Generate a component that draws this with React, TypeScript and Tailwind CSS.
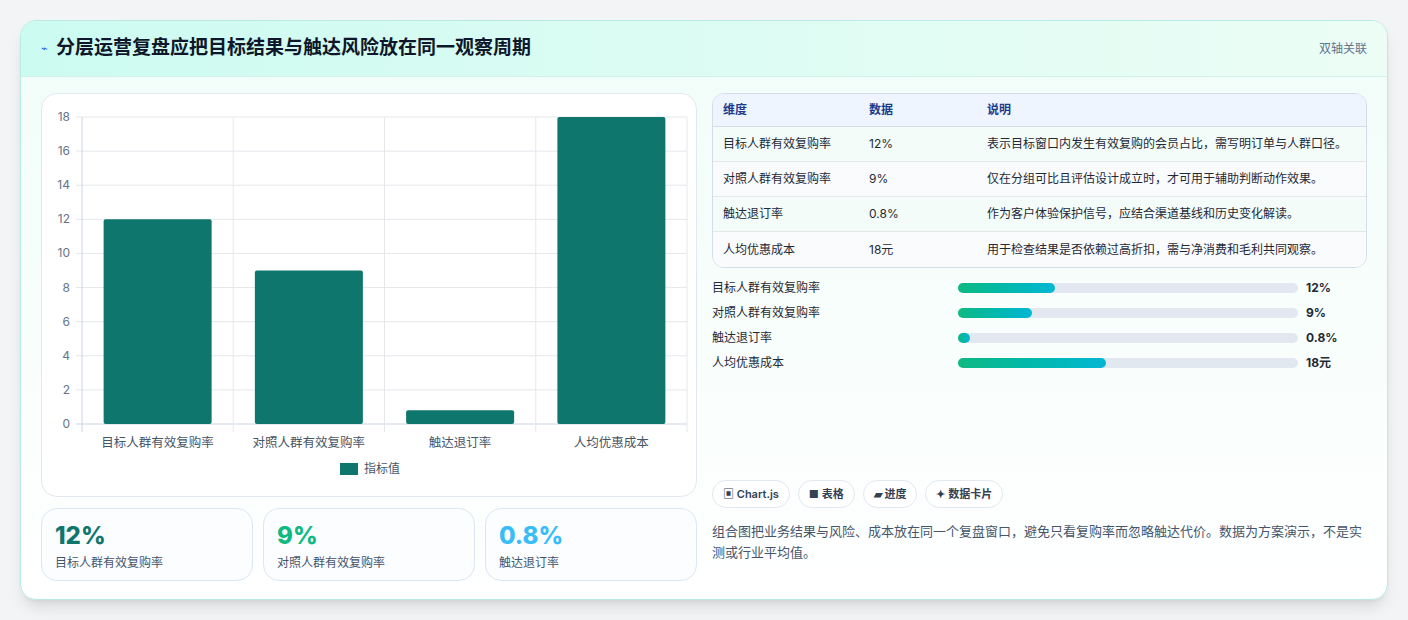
import React from 'react';

const font = { fontFamily: 'Inter, "Noto Sans CJK SC", sans-serif' };

const rows = [
  ['目标人群有效复购率', '12%', '表示目标窗口内发生有效复购的会员占比，需写明订单与人群口径。'],
  ['对照人群有效复购率', '9%', '仅在分组可比且评估设计成立时，才可用于辅助判断动作效果。'],
  ['触达退订率', '0.8%', '作为客户体验保护信号，应结合渠道基线和历史变化解读。'],
  ['人均优惠成本', '18元', '用于检查结果是否依赖过高折扣，需与净消费和毛利共同观察。'],
];

const bars = [
  { label: '目标人群有效复购率', v: '12%', w: 97 },
  { label: '对照人群有效复购率', v: '9%', w: 74 },
  { label: '触达退订率', v: '0.8%', w: 12 },
  { label: '人均优惠成本', v: '18元', w: 148 },
];

function Chart() {
  const left = 40, right = 645, top = 23, bottom = 330;
  const unit = (bottom - top) / 18;
  const col = (right - left) / 4;
  const data = [
    ['目标人群有效复购率', 12],
    ['对照人群有效复购率', 9],
    ['触达退订率', 0.8],
    ['人均优惠成本', 18],
  ] as const;
  return (
    <svg width="656" height="402" className="block">
      {[0, 2, 4, 6, 8, 10, 12, 14, 16, 18].map((t) => {
        const y = bottom - t * unit;
        return (
          <g key={t}>
            <line x1={left - 6} x2={right} y1={y} y2={y} stroke={t === 0 ? '#cbd5e1' : '#e5e7eb'} />
            <text x={left - 12} y={y + 4} textAnchor="end" fontSize="12" fill="#64748b" style={font}>{t}</text>
          </g>
        );
      })}
      {[0, 1, 2, 3, 4].map((i) => (
        <line key={i} x1={left + i * col} x2={left + i * col} y1={top} y2={bottom + 8} stroke={i === 0 ? '#cbd5e1' : '#e5e7eb'} />
      ))}
      {data.map(([l, v], i) => {
        const x = left + i * col + (col - 108) / 2;
        const h = v * unit;
        return (
          <g key={l}>
            <rect x={x} y={bottom - h} width={108} height={h} rx={2} fill="#0f766e" />
            <text x={left + i * col + col / 2} y={bottom + 23} textAnchor="middle" fontSize="12.5" fill="#475569" style={font}>{l}</text>
          </g>
        );
      })}
      <rect x={298} y={369} width={18} height={12} fill="#0f766e" />
      <text x={322} y={379} fontSize="12" fill="#475569" style={font}>指标值</text>
    </svg>
  );
}

export default function App() {
  return (
    <div className="w-[1408px] h-[620px] bg-[#f3f4f6] pt-5 px-5" style={font}>
      <div className="h-[580px] rounded-2xl border border-[#b9ebe4] bg-gradient-to-b from-[#f0fdf9] to-white shadow-lg overflow-hidden">
        <div className="h-14 flex items-center justify-between px-5 bg-gradient-to-r from-[#ccfbf1] to-[#ecfdf5] border-b border-[#d1f2ea]">
          <div className="flex items-center gap-2">
            <span className="text-[11px] text-blue-600">⌁</span>
            <h1 className="text-[19px] font-bold text-[#0f172a]">分层运营复盘应把目标结果与触达风险放在同一观察周期</h1>
          </div>
          <span className="text-[12px] text-slate-500">双轴关联</span>
        </div>
        <div className="flex gap-[15px] px-5 pt-4">
          <div className="w-[656px] flex flex-col gap-[11px]">
            <div className="h-[404px] rounded-2xl bg-white border border-[#e2e8f0]">
              <Chart />
            </div>
            <div className="grid grid-cols-3 gap-[10px]">
              {[
                ['12%', 'text-[#0f766e]', '目标人群有效复购率'],
                ['9%', 'text-[#10b981]', '对照人群有效复购率'],
                ['0.8%', 'text-[#38bdf8]', '触达退订率'],
              ].map(([v, c, l]) => (
                <div key={l} className="h-[73px] rounded-2xl border border-[#dbe7f3] bg-[#fbfdff] px-[13px] pt-[11px]">
                  <div className={`text-[24px] font-extrabold leading-8 ${c}`}>{v}</div>
                  <div className="text-[12px] text-slate-600 mt-0.5">{l}</div>
                </div>
              ))}
            </div>
          </div>
          <div className="w-[657px] flex flex-col">
            <div className="rounded-xl border border-[#d5dde8] overflow-hidden bg-white">
              <div className="flex h-[33px] items-center bg-[#eef5ff] border-b border-[#d5dde8] text-[12px] font-semibold text-[#1e3a8a]">
                <span className="w-[156px] pl-[10px]">维度</span>
                <span className="w-[118px]">数据</span>
                <span>说明</span>
              </div>
              {rows.map((r, i) => (
                <div key={r[0]} className={`flex h-[35px] items-center text-[12px] text-[#1f2937] ${i < 3 ? 'border-b border-[#e5e7eb]' : ''} ${i % 2 === 0 ? 'bg-[#f3fcf8]' : 'bg-[#f9fbfd]'}`}>
                  <span className="w-[156px] pl-[10px]">{r[0]}</span>
                  <span className="w-[118px]">{r[1]}</span>
                  <span>{r[2]}</span>
                </div>
              ))}
            </div>
            <div className="flex flex-col gap-[9px] mt-[12px]">
              {bars.map((b) => (
                <div key={b.label} className="flex items-center h-[16px] text-[12px]">
                  <span className="w-[246px] text-[#1f2937]">{b.label}</span>
                  <div className="w-[340px] h-[10px] rounded-full bg-[#e2e8f0]">
                    <div className="h-full rounded-full bg-gradient-to-r from-[#10b981] to-[#06b6d4]" style={{ width: b.w }} />
                  </div>
                  <span className="ml-2 font-bold text-[#1f2937]">{b.v}</span>
                </div>
              ))}
            </div>
            <div className="mt-auto pb-[18px]">
              <div className="flex gap-[8px]">
                {['▣ Chart.js', '■ 表格', '▰ 进度', '✦ 数据卡片'].map((c) => (
                  <span key={c} className="h-[28px] px-[10px] flex items-center rounded-full border border-[#e2e8f0] bg-white text-[11px] font-semibold text-[#334155]">{c}</span>
                ))}
              </div>
              <p className="mt-[13px] text-[13px] leading-[21px] text-slate-600">组合图把业务结果与风险、成本放在同一个复盘窗口，避免只看复购率而忽略触达代价。数据为方案演示，不是实测或行业平均值。</p>
            </div>
          </div>
        </div>
      </div>
    </div>
  );
}
